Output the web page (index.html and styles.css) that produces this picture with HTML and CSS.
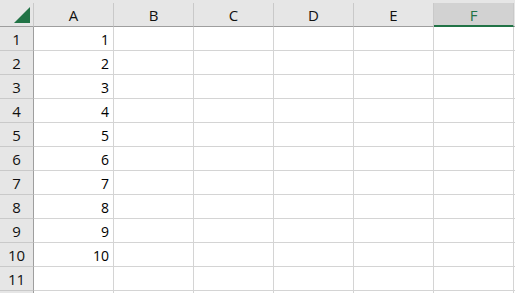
FILE: index.html
```html
<!DOCTYPE html>
<html lang="en">
<head>
    <meta charset="UTF-8">
    <title>Sheet1</title>
    <link rel="stylesheet" href="styles.css">
</head>
<body>
    <div class="sheet">
        <div class="head-row">
            <div class="corner"><span class="tri"></span></div>
            <div class="col-head">A</div>
            <div class="col-head">B</div>
            <div class="col-head">C</div>
            <div class="col-head">D</div>
            <div class="col-head">E</div>
            <div class="col-head selected">F</div>
            <div class="col-head"></div>
        </div>
        <div class="grid" id="grid"></div>
    </div>

    <script>
        const grid = document.getElementById('grid');

        // 12 linhas, 7 colunas (G e a linha 12 ficam cortadas)
        for (let r = 1; r <= 12; r++) {
            const num = document.createElement('div');
            num.className = 'row-head';
            if (r <= 11) num.textContent = r;
            grid.appendChild(num);

            for (let c = 0; c < 7; c++) {
                const cell = document.createElement('div');
                cell.className = 'cell';
                if (c === 0 && r <= 10) cell.textContent = r;
                grid.appendChild(cell);
            }
        }
    </script>
</body>
</html>
```
FILE: styles.css
```css
body {
    margin: 0;
    padding: 0;
    width: 515px;
    height: 293px;
    overflow: hidden;
    background: #ffffff;
}
.sheet {
    width: 515px;
    height: 293px;
    overflow: hidden;
}
.head-row {
    display: grid;
    grid-template-columns: 34px repeat(7, 80px);
    height: 27px;
    background: #e6e6e6;
}
.corner {
    position: relative;
    box-sizing: border-box;
    border-right: 1px solid #c9c9c9;
    border-bottom: 1px solid #9e9e9e;
    margin-top: 3px;
    height: 24px;
}
.tri {
    position: absolute;
    left: 14px;
    top: 4px;
    width: 0;
    height: 0;
    border-left: 16px solid transparent;
    border-bottom: 16px solid #217346;
}
.col-head {
    box-sizing: border-box;
    margin-top: 3px;
    height: 24px;
    border-right: 1px solid #c9c9c9;
    border-bottom: 1px solid #9e9e9e;
    display: flex;
    align-items: center;
    justify-content: center;
    font-family: "Open Sans", sans-serif;
    font-size: 15px;
    color: #111111;
    padding-top: 1px;
}
.col-head.selected {
    background: #d2d2d2;
    border-bottom: 2px solid #217346;
    color: #217346;
}
.grid {
    display: grid;
    grid-template-columns: 34px repeat(7, 80px);
    grid-auto-rows: 24px;
}
.row-head {
    box-sizing: border-box;
    background: #e6e6e6;
    border-right: 1px solid #9e9e9e;
    border-bottom: 1px solid #c9c9c9;
    display: flex;
    align-items: center;
    justify-content: center;
    font-family: "Open Sans", sans-serif;
    font-size: 15px;
    color: #111111;
}
.cell {
    box-sizing: border-box;
    border-right: 1px solid #d4d4d4;
    border-bottom: 1px solid #d4d4d4;
    display: flex;
    align-items: center;
    justify-content: flex-end;
    padding-right: 4px;
    padding-top: 2px;
    font-family: "Open Sans", sans-serif;
    font-size: 14px;
    color: #000000;
}
```
